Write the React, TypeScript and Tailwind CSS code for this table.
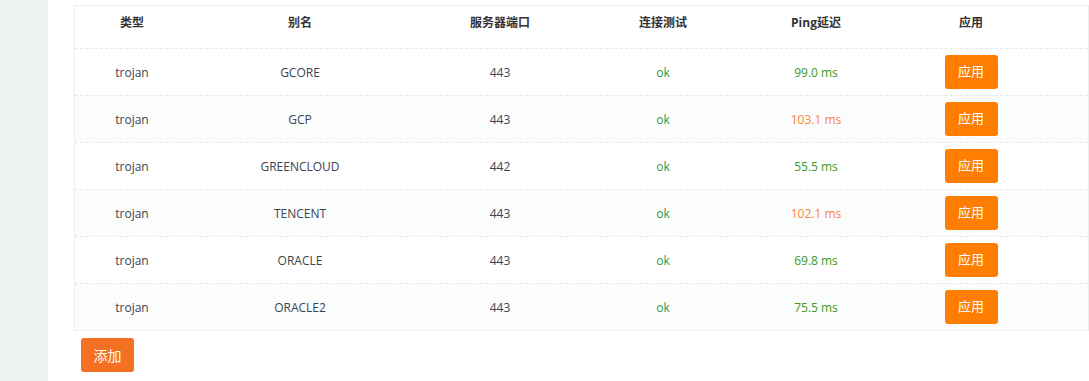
import React from 'react';

type Row = { type: string; name: string; port: string; test: string; ping: string; slow?: boolean };

const rows: Row[] = [
    { type: 'trojan', name: 'GCORE', port: '443', test: 'ok', ping: '99.0 ms' },
    { type: 'trojan', name: 'GCP', port: '443', test: 'ok', ping: '103.1 ms', slow: true },
    { type: 'trojan', name: 'GREENCLOUD', port: '442', test: 'ok', ping: '55.5 ms' },
    { type: 'trojan', name: 'TENCENT', port: '443', test: 'ok', ping: '102.1 ms', slow: true },
    { type: 'trojan', name: 'ORACLE', port: '443', test: 'ok', ping: '69.8 ms' },
    { type: 'trojan', name: 'ORACLE2', port: '443', test: 'ok', ping: '75.5 ms' },
];

const cols = "grid grid-cols-[114px_222px_178px_148px_158px_152px_1fr]";

export default function App() {
    return (
        <div className="w-[1089px] h-[381px] overflow-hidden flex bg-white font-['Open_Sans','Noto_Sans_CJK_SC',sans-serif] text-[12px] text-[#333]">
            {/* Sidebar strip */}
            <aside className="w-[48px] shrink-0 bg-[#eff2f3]" />

            <main className="flex-1 pl-[26px] pt-[5px]">
                <div className="w-[1015px] border border-[#ebeeef] bg-white">
                    {/* Header */}
                    <div className={`${cols} h-[42px] pt-[8px] font-bold text-[#333] text-center`}>
                        <div>类型</div>
                        <div>别名</div>
                        <div>服务器端口</div>
                        <div>连接测试</div>
                        <div>Ping延迟</div>
                        <div>应用</div>
                        <div />
                    </div>

                    {rows.map((r, i) => (
                        <div
                            key={r.name}
                            className={`${cols} h-[47px] items-center text-center border-t border-dashed border-[#e6e9eb] ${i % 2 === 1 ? 'bg-[#fbfcfc]' : 'bg-white'}`}
                        >
                            <div className="pt-[2px] text-[#3b4450]">{r.type}</div>
                            <div className="pt-[2px] text-[#3b4450]">{r.name}</div>
                            <div className="pt-[2px] text-[#3b4450]">{r.port}</div>
                            <div className="pt-[2px] text-[#1f9a4a]">{r.test}</div>
                            <div className={`pt-[2px] ${r.slow ? 'text-[#f7873a]' : 'text-[#3a9a1c]'}`}>{r.ping}</div>
                            <div className="flex justify-center">
                                <button className="w-[53px] h-[34px] rounded-[3px] bg-[#ff7d00] text-white text-[13px]">应用</button>
                            </div>
                            <div />
                        </div>
                    ))}
                </div>

                <button className="mt-[7px] ml-[7px] w-[53px] h-[34px] rounded-[3px] bg-[#f47022] text-white text-[14px]">添加</button>
            </main>
        </div>
    );
}
